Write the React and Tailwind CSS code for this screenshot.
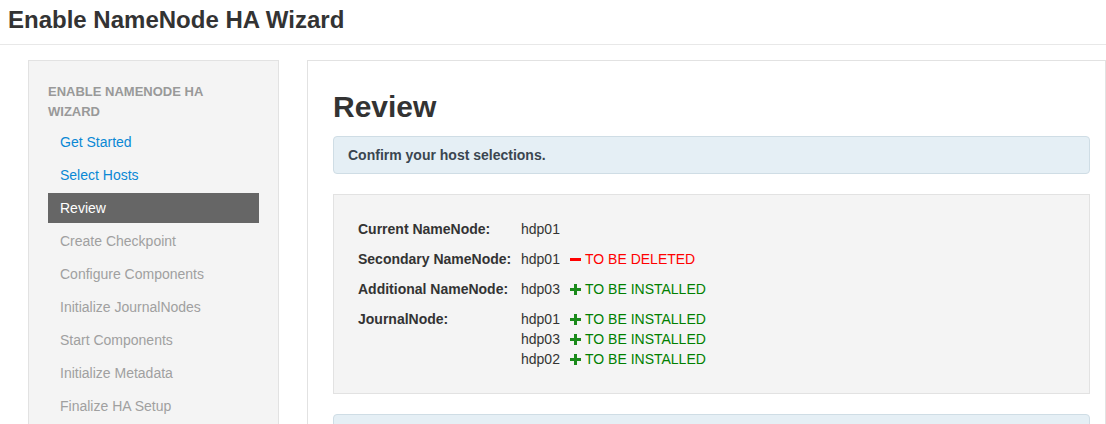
const steps = [
  { label: "Get Started", state: "done" },
  { label: "Select Hosts", state: "done" },
  { label: "Review", state: "active" },
  { label: "Create Checkpoint", state: "todo" },
  { label: "Configure Components", state: "todo" },
  { label: "Initialize JournalNodes", state: "todo" },
  { label: "Start Components", state: "todo" },
  { label: "Initialize Metadata", state: "todo" },
  { label: "Finalize HA Setup", state: "todo" },
]

const Plus = () => (
  <svg width="11" height="11" viewBox="0 0 11 11" className="shrink-0">
    <rect x="4" y="0" width="3" height="11" fill="#1a8a1a" />
    <rect x="0" y="4" width="11" height="3" fill="#1a8a1a" />
  </svg>
)

const Minus = () => (
  <svg width="11" height="11" viewBox="0 0 11 11" className="shrink-0">
    <rect x="0" y="4" width="11" height="3" fill="#ff0000" />
  </svg>
)

const Host = ({ name, action }) => (
  <div className="flex items-center h-[20px]">
    <span className="w-[49px]">{name}</span>
    {action === "delete" ? (
      <span className="flex items-center gap-[4px] text-[#ff0000]">
        <Minus />
        TO BE DELETED
      </span>
    ) : (
      <span className="flex items-center gap-[4px] text-[#008000]">
        <Plus />
        TO BE INSTALLED
      </span>
    )}
  </div>
)

const Row = ({ label, children }) => (
  <div className="flex py-[5px]">
    <div className="w-[163px] font-bold leading-[20px]">{label}</div>
    <div className="flex flex-col">{children}</div>
  </div>
)

const App = () => {
  return (
    <div className="w-[1106px] h-[424px] overflow-hidden bg-white text-[#333] font-['Liberation_Sans',Arial,sans-serif] text-[13px]">
      <header className="h-[45px] border-b border-[#e8e8e8] px-[8px] pt-[6px]">
        <h1 className="text-[24px] font-bold leading-[28px]">Enable NameNode HA Wizard</h1>
      </header>

      <div className="flex gap-[28px] pl-[28px] pt-[15px]">
        <aside className="w-[251px] shrink-0 h-[400px] bg-[#f4f4f4] border border-[#e2e2e2] px-[19px] pt-[21px]">
          <div className="w-[200px] text-[13px] font-bold uppercase leading-[20px] text-[#999] mb-[5px]">
            Enable NameNode HA Wizard
          </div>
          <ul className="w-[211px]">
            {steps.map((s) => (
              <li
                key={s.label}
                className={
                  "h-[30px] mb-[3px] flex items-center px-[12px] text-[14px] " +
                  (s.state === "active"
                    ? "bg-[#666] text-white"
                    : s.state === "done"
                    ? "text-[#0a88d4]"
                    : "text-[#a0a0a0]")
                }
              >
                {s.label}
              </li>
            ))}
          </ul>
        </aside>

        <main className="flex-1 h-[400px] bg-white border border-[#e2e2e2] pl-[25px] pr-[15px] pt-[26px]">
          <h2 className="text-[30px] font-bold leading-[40px] mb-[9px]">Review</h2>
          <div className="h-[38px] flex items-center bg-[#e5eff5] border border-[#cfdde5] rounded-[4px] px-[14px] text-[14px] font-bold text-[#3a4650]">
            Confirm your host selections.
          </div>
          <div className="mt-[20px] h-[200px] bg-[#f4f4f4] border border-[#e2e2e2] pl-[24px] pt-[19px] text-[14px]">
            <Row label="Current NameNode:">
              <div className="h-[20px] leading-[20px]">hdp01</div>
            </Row>
            <Row label="Secondary NameNode:">
              <Host name="hdp01" action="delete" />
            </Row>
            <Row label="Additional NameNode:">
              <Host name="hdp03" action="install" />
            </Row>
            <Row label="JournalNode:">
              <Host name="hdp01" action="install" />
              <Host name="hdp03" action="install" />
              <Host name="hdp02" action="install" />
            </Row>
          </div>
          <div className="mt-[20px] h-[40px] bg-[#e5eff5] border border-[#cfdde5] rounded-[4px]" />
        </main>
      </div>
    </div>
  )
}

export default App
